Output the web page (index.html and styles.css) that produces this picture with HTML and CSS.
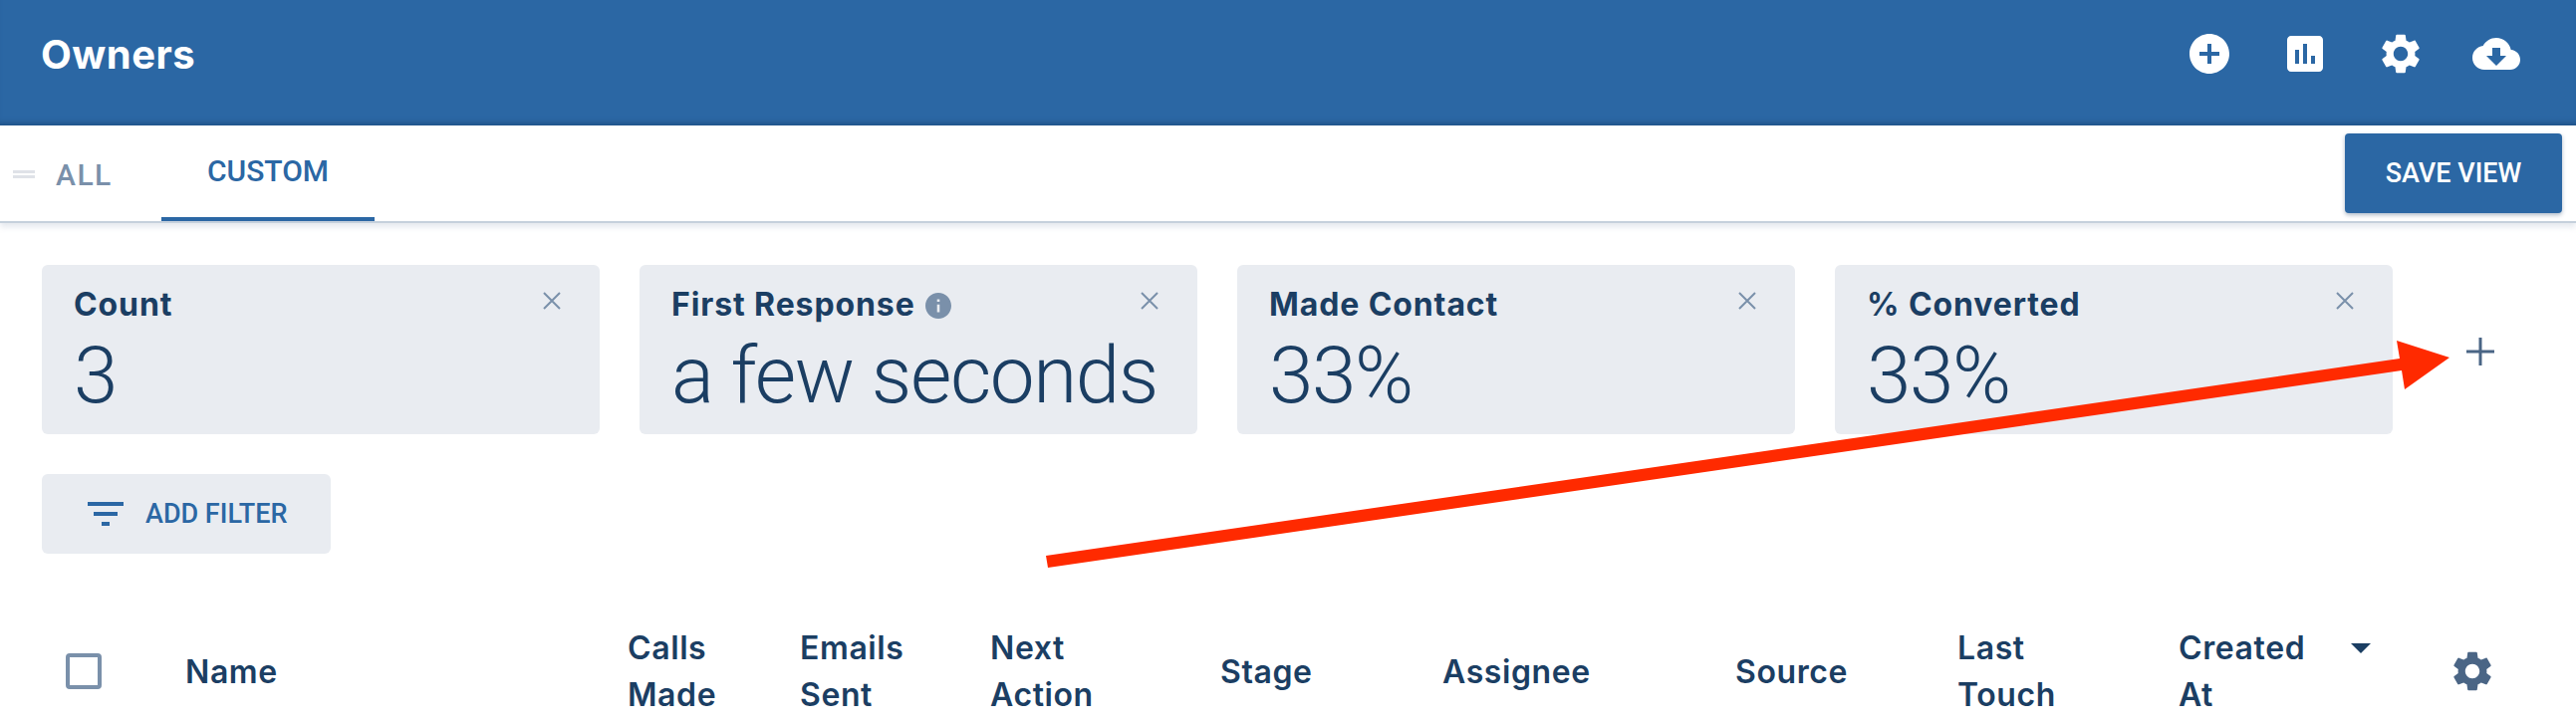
FILE: index.html
```html
<!DOCTYPE html>
<html lang="en">
<head>
    <meta charset="UTF-8">
    <meta name="viewport" content="width=device-width, initial-scale=1.0">
    <title>Owners</title>
    <link rel="stylesheet" href="styles.css">
</head>
<body>
    <header class="topbar">
        <h1 class="topbar-title">Owners</h1>
        <div class="topbar-icons">
            <svg class="icon-lg" viewBox="0 0 24 24"><path d="M12 2C6.48 2 2 6.48 2 12s4.48 10 10 10 10-4.48 10-10S17.52 2 12 2zm5 11h-4v4h-2v-4H7v-2h4V7h2v4h4v2z"/></svg>
            <svg class="icon-lg" viewBox="0 0 24 24"><path d="M19 3H5c-1.1 0-2 .9-2 2v14c0 1.1.9 2 2 2h14c1.1 0 2-.9 2-2V5c0-1.1-.9-2-2-2zM9 17H7v-7h2v7zm4 0h-2V7h2v10zm4 0h-2v-4h2v4z"/></svg>
            <svg class="icon-lg" viewBox="0 0 24 24"><path d="M19.14 12.94c.04-.3.06-.61.06-.94 0-.32-.02-.64-.07-.94l2.03-1.58c.18-.14.23-.41.12-.61l-1.92-3.32c-.12-.22-.37-.29-.59-.22l-2.39.96c-.5-.38-1.03-.7-1.62-.94l-.36-2.54c-.04-.24-.24-.41-.48-.41h-3.84c-.24 0-.43.17-.47.41l-.36 2.54c-.59.24-1.13.57-1.62.94l-2.39-.96c-.22-.08-.47 0-.59.22L2.74 8.87c-.12.21-.08.47.12.61l2.03 1.58c-.05.3-.09.63-.09.94s.02.64.07.94l-2.03 1.58c-.18.14-.23.41-.12.61l1.92 3.32c.12.22.37.29.59.22l2.39-.96c.5.38 1.03.7 1.62.94l.36 2.54c.05.24.24.41.48.41h3.84c.24 0 .44-.17.47-.41l.36-2.54c.59-.24 1.13-.56 1.62-.94l2.39.96c.22.08.47 0 .59-.22l1.92-3.32c.12-.22.07-.47-.12-.61l-2.01-1.58zM12 15.6c-1.98 0-3.6-1.62-3.6-3.6s1.62-3.6 3.6-3.6 3.6 1.62 3.6 3.6-1.62 3.6-3.6 3.6z"/></svg>
            <svg class="icon-lg" viewBox="0 0 24 24"><path d="M19.35 10.04C18.67 6.59 15.64 4 12 4 9.11 4 6.6 5.64 5.35 8.04 2.34 8.36 0 10.91 0 14c0 3.31 2.69 6 6 6h13c2.76 0 5-2.24 5-5 0-2.64-2.05-4.78-4.65-4.96zM17 13l-5 5-5-5h3V9h4v4h3z"/></svg>
        </div>
    </header>

    <nav class="tabs">
        <div class="tab tab-all">
            <span class="drag-handle"></span>
            <span>ALL</span>
        </div>
        <div class="tab tab-custom">CUSTOM</div>
        <button class="save-btn">SAVE VIEW</button>
    </nav>

    <main class="content">
        <section class="cards">
            <div class="card">
                <div class="card-head">
                    <span class="card-label">Count</span>
                    <svg class="card-close" viewBox="0 0 18 18"><path d="M1 1l16 16M17 1L1 17"/></svg>
                </div>
                <div class="card-value">3</div>
            </div>
            <div class="card">
                <div class="card-head">
                    <span class="card-label">First Response</span>
                    <svg class="info-icon" viewBox="2 2 20 20"><path d="M12 2C6.48 2 2 6.48 2 12s4.48 10 10 10 10-4.48 10-10S17.52 2 12 2zm1 15h-2v-6h2v6zm0-8h-2V7h2v2z"/></svg>
                    <svg class="card-close" viewBox="0 0 18 18"><path d="M1 1l16 16M17 1L1 17"/></svg>
                </div>
                <div class="card-value">a few seconds</div>
            </div>
            <div class="card">
                <div class="card-head">
                    <span class="card-label">Made Contact</span>
                    <svg class="card-close" viewBox="0 0 18 18"><path d="M1 1l16 16M17 1L1 17"/></svg>
                </div>
                <div class="card-value">33%</div>
            </div>
            <div class="card">
                <div class="card-head">
                    <span class="card-label">% Converted</span>
                    <svg class="card-close" viewBox="0 0 18 18"><path d="M1 1l16 16M17 1L1 17"/></svg>
                </div>
                <div class="card-value">33%</div>
            </div>
            <svg class="add-card" viewBox="0 0 28 28"><path d="M14 0v28M0 14h28"/></svg>
        </section>

        <button class="filter-btn">
            <svg class="icon-lg" viewBox="0 0 24 24"><path d="M10 18h4v-2h-4v2zM3 6v2h18V6H3zm3 7h12v-2H6v2z"/></svg>
            <span>ADD FILTER</span>
        </button>

        <div class="table-head">
            <span class="checkbox"></span>
            <span>Name</span>
            <span>Calls<br>Made</span>
            <span>Emails<br>Sent</span>
            <span>Next<br>Action</span>
            <span>Stage</span>
            <span>Assignee</span>
            <span>Source</span>
            <span>Last<br>Touch</span>
            <span class="sorted">Created<br>At<svg class="sort-arrow" viewBox="0 0 20 10"><path d="M0 0h20L10 10z"/></svg></span>
            <svg class="icon-lg table-gear" viewBox="0 0 24 24"><path d="M19.14 12.94c.04-.3.06-.61.06-.94 0-.32-.02-.64-.07-.94l2.03-1.58c.18-.14.23-.41.12-.61l-1.92-3.32c-.12-.22-.37-.29-.59-.22l-2.39.96c-.5-.38-1.03-.7-1.62-.94l-.36-2.54c-.04-.24-.24-.41-.48-.41h-3.84c-.24 0-.43.17-.47.41l-.36 2.54c-.59.24-1.13.57-1.62.94l-2.39-.96c-.22-.08-.47 0-.59.22L2.74 8.87c-.12.21-.08.47.12.61l2.03 1.58c-.05.3-.09.63-.09.94s.02.64.07.94l-2.03 1.58c-.18.14-.23.41-.12.61l1.92 3.32c.12.22.37.29.59.22l2.39-.96c.5.38 1.03.7 1.62.94l.36 2.54c.05.24.24.41.48.41h3.84c.24 0 .44-.17.47-.41l.36-2.54c.59-.24 1.13-.56 1.62-.94l2.39.96c.22.08.47 0 .59-.22l1.92-3.32c.12-.22.07-.47-.12-.61l-2.01-1.58zM12 15.6c-1.98 0-3.6-1.62-3.6-3.6s1.62-3.6 3.6-3.6 3.6 1.62 3.6 3.6-1.62 3.6-3.6 3.6z"/></svg>
        </div>
    </main>

    <!-- red annotation arrow drawn over the page -->
    <svg class="annotation" viewBox="0 0 2586 728"><polygon points="1050,558 2409,360 2406,342 2459,359 2414,391 2411,372 1052,570"/></svg>
</body>
</html>
```

FILE: styles.css
```css
body {
    margin: 0;
    width: 2586px;
    height: 728px;
    overflow: hidden;
    position: relative;
    background-color: #ffffff;
    font-family: 'Inter', 'Open Sans', sans-serif;
    color: #1b3e63;
}

.icon-lg {
    width: 48px;
    height: 48px;
    display: block;
    fill: currentColor;
    flex: none;
}

/* top bar */
.topbar {
    height: 126px;
    box-sizing: border-box;
    padding: 0 56px 18px 41px;
    display: flex;
    align-items: center;
    justify-content: space-between;
    background-color: #2b67a4;
    box-shadow: inset 0 -7px 6px -5px #1f4f83;
    color: #ffffff;
}

.topbar-title {
    margin: 0;
    font-size: 40px;
    font-weight: 700;
    letter-spacing: 0.5px;
}

.topbar-icons {
    display: flex;
    gap: 48px;
}

/* tabs */
.tabs {
    height: 98px;
    box-sizing: border-box;
    display: flex;
    align-items: stretch;
    border-bottom: 2px solid #c5d0dc;
    box-shadow: 0 4px 6px rgba(120, 140, 170, 0.2);
    font-family: 'Roboto', sans-serif;
    font-size: 30px;
    font-weight: 500;
}

.tab {
    display: flex;
    align-items: center;
    box-sizing: border-box;
}

.tab-all {
    width: 162px;
    padding: 3px 0 0 13px;
    color: #7a90aa;
    letter-spacing: 1.5px;
}

.drag-handle {
    width: 22px;
    height: 8px;
    margin: -2px 21px 0 0;
    box-sizing: border-box;
    border-top: 3px solid #dfe2e8;
    border-bottom: 3px solid #dfe2e8;
}

.tab-custom {
    width: 214px;
    justify-content: center;
    padding-bottom: 1px;
    color: #2b67a4;
    border-bottom: 4px solid #2b67a4;
}

.save-btn {
    margin: 8px 14px 0 auto;
    width: 218px;
    height: 80px;
    border: none;
    border-radius: 4px;
    background-color: #2b67a4;
    box-shadow: 0 2px 4px rgba(30, 60, 100, 0.35);
    color: #ffffff;
    font-family: 'Roboto', sans-serif;
    font-size: 27px;
    font-weight: 500;
}

/* metric cards */
.content {
    padding: 42px 42px 0;
}

.cards {
    display: flex;
    align-items: center;
    gap: 40px;
}

.card {
    width: 560px;
    height: 170px;
    box-sizing: border-box;
    padding: 20px 39px 0 33px;
    background-color: #e9ecf1;
    border-radius: 6px;
}

.card-head {
    display: flex;
    align-items: flex-start;
    height: 44px;
}

.card-label {
    font-size: 32px;
    font-weight: 700;
    line-height: 40px;
    margin-left: -1px;
    letter-spacing: 0.9px;
}

.info-icon {
    width: 26px;
    height: 26px;
    margin: 8px 0 0 10px;
    fill: #7a90aa;
}

.card-close {
    width: 18px;
    height: 18px;
    margin: 7px 0 0 auto;
    fill: none;
    stroke: #7a90aa;
    stroke-width: 2;
}

.card-value {
    font-family: 'Roboto', sans-serif;
    font-size: 80px;
    font-weight: 300;
    line-height: 94px;
    letter-spacing: -1.4px;
    margin-left: -1px;
    white-space: nowrap;
}

.add-card {
    width: 28px;
    height: 28px;
    margin: 3px 0 0 34px;
    fill: none;
    stroke: #4a6585;
    stroke-width: 3;
    flex: none;
}

/* filter button */
.filter-btn {
    margin-top: 40px;
    width: 290px;
    height: 80px;
    display: flex;
    align-items: center;
    gap: 16px;
    padding: 0 0 0 40px;
    border: none;
    border-radius: 6px;
    background-color: #e9ecf1;
    color: #2b67a4;
    font-family: 'Roboto', sans-serif;
    font-size: 27px;
    font-weight: 500;
}

/* table header */
.table-head {
    margin: 71px 0 0 24px;
    display: grid;
    grid-template-columns: 120px 444px 173px 191px 231px 223px 294px 223px 222px 276px 48px;
    align-items: center;
    font-size: 32px;
    font-weight: 600;
    line-height: 47px;
    letter-spacing: 0.6px;
}

.checkbox {
    width: 36px;
    height: 36px;
    box-sizing: border-box;
    border: 4px solid #7a90aa;
    border-radius: 4px;
}

.sorted {
    position: relative;
}

.sort-arrow {
    position: absolute;
    left: 173px;
    top: 19px;
    width: 20px;
    height: 10px;
    fill: #1b3e63;
}

.table-gear {
    margin-left: -5px;
    color: #4a6585;
}

/* annotation */
.annotation {
    position: absolute;
    top: 0;
    left: 0;
    width: 2586px;
    height: 728px;
    fill: #ff2a00;
    pointer-events: none;
}
```
